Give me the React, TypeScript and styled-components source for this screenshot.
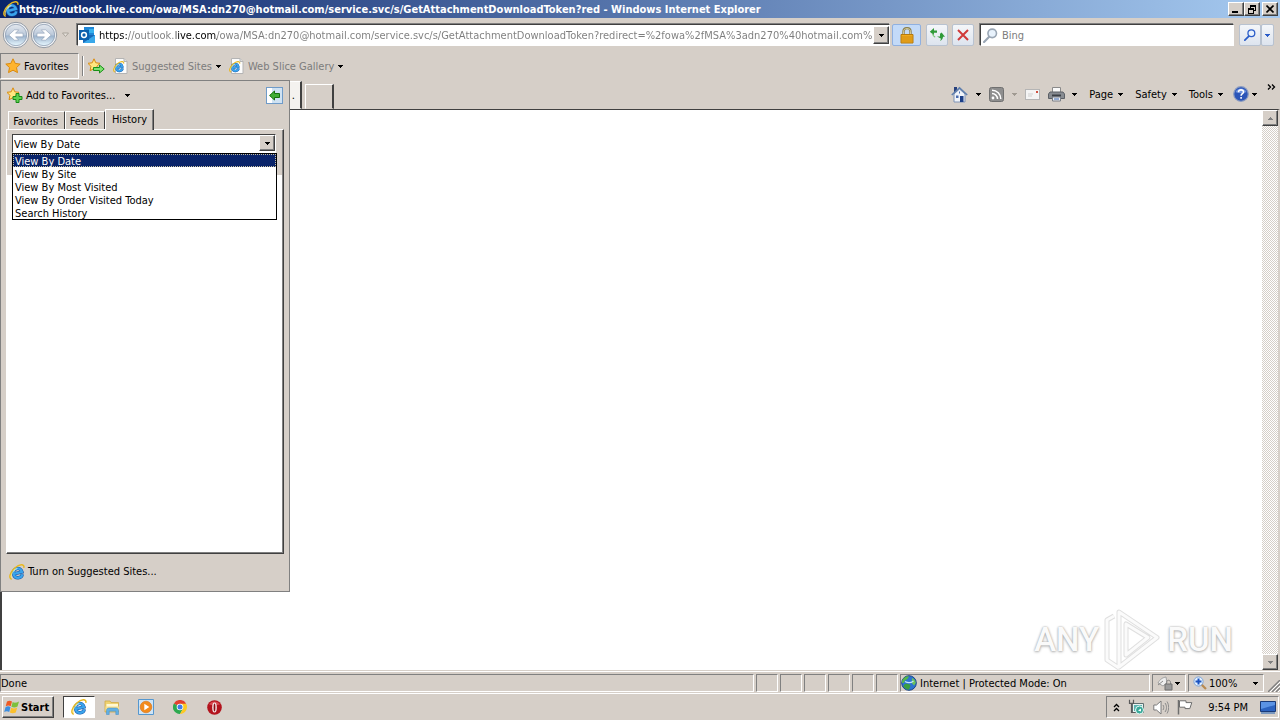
import React from "react";
import styled, { createGlobalStyle, css } from "styled-components";

const face = "#d6cfc8";
const shade = "#808080";
const dark = "#404040";
const ink = "#000000";

const GlobalStyle = createGlobalStyle`
  *, *::before, *::after { box-sizing: border-box; }
  body {
    margin: 0;
    background: ${face};
    color: ${ink};
    font: 11px/13px "DejaVu Sans Condensed", Tahoma, "DejaVu Sans", sans-serif;
  }
  button, input, select { font: inherit; color: inherit; }
  button { padding: 0; border: 0; background: none; white-space: nowrap; }
  a { color: inherit; text-decoration: none; }
  svg { display: block; flex: none; }
`;

const raised = css`
  background: ${face};
  border: 1px solid;
  border-color: #ffffff ${dark} ${dark} #ffffff;
  box-shadow: inset -1px -1px 0 ${shade};
`;

const sunken = css`
  border: 1px solid;
  border-color: ${shade} #ffffff #ffffff ${shade};
`;

/* ---------- Window frame ---------- */

const Desktop = styled.div`
  display: flex;
  flex-direction: column;
  min-height: 100vh;
`;

const TitleBar = styled.header`
  display: flex;
  align-items: center;
  height: 18px;
  padding: 0 2px 0 3px;
  background: linear-gradient(to right, #0a246a, #a6caf0);
`;

const Title = styled.h1`
  flex: 1;
  min-width: 0;
  margin: 0;
  padding-top: 1px;
  overflow: hidden;
  color: #ffffff;
  font-size: 11px;
  font-weight: 700;
  line-height: 17px;
  white-space: nowrap;
`;

const WindowButtons = styled.div`
  display: flex;
`;

const WindowButton = styled.button<{ $gap?: boolean }>`
  ${raised}
  display: grid;
  place-items: center;
  width: 16px;
  height: 14px;
  margin-left: ${(p) => (p.$gap ? 2 : 0)}px;
`;

/* ---------- Navigation bar ---------- */

const NavBar = styled.nav`
  display: flex;
  align-items: center;
  height: 34px;
  padding: 0 6px 0 2px;
`;

const TravelButtons = styled.div`
  display: flex;
  align-items: center;
  width: 74px;
`;

const PlainButton = styled.button`
  display: flex;
  align-items: center;
`;

const AddressBox = styled.div`
  display: flex;
  flex: 1;
  align-items: center;
  min-width: 0;
  height: 22px;
  padding-left: 1px;
  background: #ffffff;
  border: 1px solid;
  border-color: ${dark} #ffffff #ffffff ${dark};
  box-shadow: -1px -1px 0 ${shade};
  margin-left: 1px;
`;

const AddressInput = styled.input`
  flex: 1;
  min-width: 0;
  height: 20px;
  margin-left: 4px;
  padding: 1px 0 0;
  border: 0;
  outline: 0;
  color: transparent;
  background: linear-gradient(
    to right,
    #000000 28px,
    #7c7c7c 28px,
    #7c7c7c 77px,
    #000000 77px,
    #000000 118px,
    #7c7c7c 118px
  );
  background-clip: text;
`;

const DropButton = styled.button`
  ${raised}
  display: grid;
  flex: none;
  place-items: center;
  width: 16px;
  height: 18px;
`;

const NavButton = styled.button<{ $w: number; $lit?: boolean; $gap: number }>`
  display: grid;
  flex: none;
  place-items: center;
  width: ${(p) => p.$w}px;
  height: 22px;
  margin-left: ${(p) => p.$gap}px;
  border: 1px solid ${(p) => (p.$lit ? "#8fb0e0" : "#b8c2d0")};
  border-radius: 2px;
  background: ${(p) => (p.$lit ? "#c3daf8" : "linear-gradient(#f4f6f9, #dde4ee)")};
`;

const SearchBox = styled.label`
  display: flex;
  flex: 0 0 254px;
  align-items: center;
  height: 22px;
  margin-left: 6px;
  padding-left: 2px;
  background: #ffffff;
  border: 1px solid;
  border-color: ${dark} #ffffff #ffffff ${dark};
  box-shadow: -1px -1px 0 ${shade};
`;

const SearchInput = styled.input`
  flex: 1;
  min-width: 0;
  height: 20px;
  margin-left: 4px;
  padding: 1px 0 0;
  border: 0;
  outline: 0;
  background: transparent;
  &::placeholder { color: #7c7c7c; opacity: 1; }
`;

/* ---------- Favorites bar ---------- */

const FavoritesBar = styled.div`
  display: flex;
  align-items: center;
  height: 28px;
`;

const FavoritesToggle = styled.button`
  display: flex;
  align-items: center;
  gap: 2px;
  width: 79px;
  height: 26px;
  padding-left: 4px;
  border: 1px solid;
  border-color: ${shade} #ffffff #ffffff ${shade};
`;

const Divider = styled.span`
  width: 2px;
  height: 20px;
  margin: 0 4px 0 3px;
  border-left: 1px solid ${shade};
  border-right: 1px solid #ffffff;
`;

const FavoriteLink = styled.button`
  display: flex;
  align-items: center;
  gap: 4px;
  height: 22px;
  margin-left: 8px;
  color: #7c7c7c;
`;

/* ---------- Tabs and command bar ---------- */

const CommandRow = styled.div`
  display: flex;
  align-items: flex-end;
  height: 29px;
`;

const PageTab = styled.button`
  width: 302px;
  height: 28px;
  padding-right: 5px;
  text-align: right;
  background: #f4f2ef;
  border: 1px solid;
  border-color: #ffffff ${dark} transparent #ffffff;
  border-right-width: 2px;
`;

const NewTab = styled.button`
  width: 29px;
  height: 25px;
  margin-left: 3px;
  border: 1px solid;
  border-color: #ffffff ${dark} transparent #ffffff;
  border-right-width: 2px;
`;

const CommandBar = styled.div`
  display: flex;
  align-items: center;
  height: 30px;
  margin-left: auto;
  padding-right: 4px;
`;

const Command = styled.button<{ $gap?: number; $inner?: number }>`
  display: flex;
  align-items: center;
  gap: ${(p) => p.$inner ?? 5}px;
  height: 20px;
  margin-left: ${(p) => p.$gap ?? 12}px;
`;

const Chevron = styled.button`
  align-self: flex-start;
  height: 16px;
  margin-left: 10px;
`;

/* ---------- Browser viewport ---------- */

const Browser = styled.main`
  position: relative;
  display: flex;
  flex: 1;
  flex-direction: column;
`;

const Viewport = styled.div`
  display: flex;
  flex: 1;
  justify-content: flex-end;
  min-height: 400px;
  background: #ffffff;
  border: solid ${dark};
  border-width: 1px 0 0 2px;
  border-right: 2px solid ${face};
`;

const ScrollBar = styled.div`
  display: flex;
  flex-direction: column;
  justify-content: space-between;
  width: 16px;
  background: repeating-conic-gradient(#ffffff 0 25%, ${face} 0 50%) 0 0 / 2px 2px;
`;

const ScrollButton = styled.button`
  ${raised}
  display: grid;
  place-items: center;
  width: 16px;
  height: 16px;
`;

const Watermark = styled.div`
  position: absolute;
  right: 47px;
  bottom: 0;
  display: flex;
  align-items: center;
  gap: 5px;
  height: 61px;
  color: #fafafa;
  font: 500 33px/38px Roboto, "Liberation Sans", sans-serif;
  text-shadow: 0 0 2px #a4a4a4, 0 1px 3px #b8b8b8;
  pointer-events: none;
`;

/* ---------- Favorites center ---------- */

const Center = styled.aside`
  position: absolute;
  top: 0;
  bottom: 78px;
  left: 0;
  z-index: 1;
  display: flex;
  flex-direction: column;
  width: 290px;
  padding: 0 5px;
  background: ${face};
  border: 1px solid ${shade};
`;

const CenterHeader = styled.div`
  display: flex;
  align-items: center;
  justify-content: space-between;
  height: 28px;
  padding: 0 1px;
`;

const AddButton = styled.button`
  display: flex;
  align-items: center;
  gap: 2px;
`;

const AddLabel = styled.span`
  margin-right: 8px;
`;

const DockButton = styled.button`
  display: grid;
  place-items: center;
  width: 17px;
  height: 17px;
  background: linear-gradient(to right, #ffffff 5px, #cfe2f3 5px);
  border: 1px solid #6f9bc8;
`;

const CenterTabs = styled.div`
  display: flex;
  align-items: flex-end;
  height: 20px;
  padding-left: 2px;
`;

const CenterTab = styled.button<{ $w: number; $active?: boolean }>`
  position: relative;
  z-index: ${(p) => (p.$active ? 1 : 0)};
  width: ${(p) => p.$w}px;
  height: ${(p) => (p.$active ? 21 : 18)}px;
  margin-bottom: ${(p) => (p.$active ? -1 : 0)}px;
  padding: ${(p) => (p.$active ? "0 0 1px" : "2px 2px 0 0")};
  background: ${face};
  border: 1px solid;
  border-color: #ffffff ${dark} transparent #ffffff;
  border-bottom-width: 0;
  box-shadow: ${(p) => (p.$active ? `inset -1px 0 0 ${shade}` : "none")};
`;

const Pane = styled.section`
  position: relative;
  display: flex;
  flex: 1;
  flex-direction: column;
  background: #ffffff;
  border: 1px solid;
  border-color: #ffffff ${dark} ${dark} #ffffff;
  box-shadow: inset -1px -1px 0 ${shade};
`;

const PaneHead = styled.div`
  height: 45px;
  margin-right: 1px;
  padding: 4px 6px 0 5px;
  background: ${face};
`;

const SelectWrap = styled.div`
  position: relative;
`;

const ViewSelect = styled.select`
  display: block;
  width: 100%;
  height: 19px;
  padding: 2px 0 0 1px;
  appearance: none;
  background: #ffffff;
  border: 1px solid;
  border-color: ${dark} #ffffff #ffffff ${dark};
  border-radius: 0;
  outline: 0;
`;

const SelectArrow = styled.span`
  ${raised}
  position: absolute;
  top: 1px;
  right: 1px;
  display: grid;
  place-items: center;
  width: 16px;
  height: 16px;
  pointer-events: none;
`;

const OptionList = styled.ul`
  position: absolute;
  top: 19px;
  right: -1px;
  left: 0;
  margin: 0;
  padding: 0;
  background: #ffffff;
  border: 1px solid #000000;
  list-style: none;
`;

const Option = styled.li<{ $selected?: boolean }>`
  height: 13px;
  padding-left: 2px;
  line-height: 15px;
  color: ${(p) => (p.$selected ? "#ffffff" : ink)};
  background: ${(p) => (p.$selected ? "#0a246a" : "transparent")};
  outline: ${(p) => (p.$selected ? "1px dotted #c8c0a0" : "none")};
  outline-offset: -1px;
`;

const CenterFooter = styled.div`
  display: flex;
  align-items: center;
  height: 37px;
  padding: 0 0 2px 3px;
`;

const SuggestLink = styled.a`
  display: flex;
  align-items: center;
  gap: 3px;
`;

/* ---------- Status bar ---------- */

const StatusBar = styled.footer`
  display: flex;
  gap: 2px;
  height: 23px;
  margin-top: 1px;
  padding: 2px 0 1px;
  border-top: 1px solid #ffffff;
  border-bottom: 1px solid #ffffff;
`;

const StatusCell = styled.div<{ $w?: number }>`
  ${sunken}
  display: flex;
  flex: ${(p) => (p.$w ? `0 0 ${p.$w}px` : "1")};
  align-items: center;
  gap: 3px;
  min-width: 0;
  white-space: nowrap;
`;

const StatusButton = styled.button`
  display: flex;
  flex: 1;
  align-items: center;
  justify-content: space-between;
  padding: 0 5px 0 4px;
`;

const ZoomLabel = styled.span`
  display: flex;
  align-items: center;
  gap: 2px;
`;

const GripCell = styled.div`
  display: flex;
  align-items: flex-end;
  justify-content: flex-end;
  width: 14px;
`;

/* ---------- Taskbar ---------- */

const TaskBar = styled.div`
  display: flex;
  align-items: center;
  height: 26px;
  padding: 0 1px 0 2px;
`;

const StartButton = styled.button`
  ${raised}
  display: flex;
  align-items: center;
  gap: 1px;
  width: 52px;
  height: 22px;
  padding-left: 1px;
  font-weight: 700;
`;

const TaskButton = styled.button<{ $active?: boolean }>`
  display: grid;
  place-items: center;
  width: ${(p) => (p.$active ? 32 : 34)}px;
  height: 22px;
  ${(p) =>
    p.$active &&
    css`
      background: #ffffff;
      border: 1px solid;
      border-color: ${dark} #ffffff #ffffff ${dark};
    `}
`;

const QuickLaunch = styled.div`
  display: flex;
  margin-left: 9px;
`;

const Tray = styled.div`
  ${sunken}
  display: flex;
  align-items: center;
  gap: 8px;
  width: 173px;
  height: 22px;
  margin-left: auto;
  padding: 0 2px 0 6px;
`;

const Clock = styled.time`
  margin: 0 4px 0 auto;
  white-space: nowrap;
`;

/* ---------- Icons ---------- */

const Caret = ({ color = ink, up = false }: { color?: string; up?: boolean }) => (
  <svg width="5" height="3" viewBox="0 0 5 3" shapeRendering="crispEdges" aria-hidden="true">
    <path d={up ? "M0 3h5v-1h-1v-1h-1v-1h-1v1h-1v1h-1z" : "M0 0h5v1h-1v1h-1v1h-1v-1h-1v-1h-1z"} fill={color} />
  </svg>
);

const IeGlyph = () => (
  <>
    <g transform="rotate(-14 8.500 9)">
      <path d="M4.900 9h8.200C13.100 3 4.400 3 4.400 9c0 6 7 6 8.400 2.400" fill="none" stroke="#1b58a8" strokeWidth="3.400" />
      <path d="M4.900 9h8.200C13.100 3 4.400 3 4.400 9c0 6 7 6 8.400 2.400" fill="none" stroke="#3aa4ec" strokeWidth="2.300" />
      <path d="M5 6.600c1-1.600 2.500-2.200 4.500-2" stroke="#b4e4ff" strokeWidth="1" fill="none" />
    </g>
    <path d="M2.800 15.200C-.8 14.500 1 8 5.800 4 10.200.3 15.800-.6 14.800 3.800" fill="none" stroke="#e8b820" strokeWidth="1.500" />
    <path d="M2.600 13.800C1.500 12 3 8 6.500 4.800" fill="none" stroke="#fbe67a" strokeWidth=".8" />
  </>
);

const IeIcon = ({ size = 16 }: { size?: number }) => (
  <svg width={size} height={size} viewBox="0 0 16 16" aria-hidden="true">
    <IeGlyph />
  </svg>
);

const IePage = () => (
  <svg width="15" height="16" viewBox="0 0 15 16" aria-hidden="true">
    <path d="M2.500.5h8.500l3 3v12H2.500z" fill="#fcfcfc" stroke="#b4b4b4" />
    <path d="M11 .5v3h3" fill="#dddddd" stroke="#b4b4b4" />
    <g transform="translate(0 3) scale(.72)">
      <IeGlyph />
    </g>
  </svg>
);

const Star = ({ badge }: { badge?: "plus" | "arrow" }) => (
  <svg width="17" height="16" viewBox="0 0 17 16" aria-hidden="true">
    <path
      d={badge ? "M6 .8l1.800 4 4.200.5-3.100 3 .9 4.400L6 10.600l-3.900 2.100.8-4.400-3-3 4.300-.5z" : "M8 .8l2.200 4.600 5 .7-3.700 3.500 1 5L8 12.200l-4.500 2.400 1-5L.8 6.100l5-.7z"}
      fill={badge ? "#ffe680" : "#ffb42e"}
      stroke="#d98a10"
    />
    {badge === "plus" && <path d="M9 6.500h3v3h3v3h-3v3H9v-3H6v-3h3z" fill="#5ed050" stroke="#168a16" />}
    {badge === "arrow" && <path d="M5.500 9.500h6V7l4.700 4-4.700 4v-2.500h-6z" fill="#7fe070" stroke="#189018" />}
  </svg>
);

const TravelIcon = ({ forward }: { forward?: boolean }) => (
  <svg width="28" height="28" viewBox="0 0 28 28" aria-hidden="true">
    <defs>
      <linearGradient id="orb" x1="0" y1="0" x2="0" y2="1">
        <stop offset="0" stopColor="#e4e8ee" />
        <stop offset=".48" stopColor="#bccadb" />
        <stop offset=".55" stopColor="#9db4cd" />
        <stop offset="1" stopColor="#e8f8ff" />
      </linearGradient>
    </defs>
    <circle cx="14" cy="14" r="12.700" fill="#f3f5f7" stroke="#9299a3" />
    <circle cx="14" cy="14" r="10.700" fill="url(#orb)" stroke="#8c9bb0" strokeWidth=".8" />
    <path
      d={forward ? "M7 12.200h7.500L11.300 8.800h4.200l5.700 5.200-5.700 5.200h-4.200l3.200-3.400H7z" : "M21 12.200h-7.500l3.200-3.400h-4.200L6.800 14l5.700 5.200h4.200l-3.200-3.400H21z"}
      fill="#ffffff"
      stroke="#7f90a8"
      strokeWidth=".5"
    />
  </svg>
);

const OutlookIcon = () => (
  <svg width="16" height="16" viewBox="0 0 16 16" aria-hidden="true">
    <path d="M5 0h10v8H5z" fill="#1f86d6" />
    <path d="M10 2h5v4h-5z" fill="#35b1ee" />
    <path d="M4 8h12v8H4z" fill="#1768b8" />
    <path d="M4 16l12-8v8z" fill="#39a8ea" />
    <path d="M0 3h10v10H0z" fill="#0b5fad" />
    <circle cx="5" cy="8" r="2.400" fill="none" stroke="#ffffff" strokeWidth="1.500" />
  </svg>
);

const LockIcon = () => (
  <svg width="14" height="17" viewBox="0 0 14 17" aria-hidden="true">
    <path d="M3.500 8V4.500C3.500 0 10.500 0 10.500 4.500V8" fill="none" stroke="#8d8253" strokeWidth="2.400" />
    <path d="M3.500 8V4.500C3.500 .6 10.500 .6 10.500 4.500V8" fill="none" stroke="#e4dca8" strokeWidth=".8" />
    <path d="M1 7.500h12v8.500H1z" fill="#f0aa1e" stroke="#b57a10" />
    <path d="M1.500 10h11M1.500 12h11M1.500 14h11" stroke="#c98812" strokeWidth=".8" />
  </svg>
);

const RefreshIcon = () => (
  <svg width="16" height="14" viewBox="0 0 16 14" aria-hidden="true">
    <path d="M5 0v2.500h3v2.200H5v2.600L.8 3.700z" fill="#2f9a38" />
    <path d="M3.600 5.500c.2 2 1 3 2.600 3.600" fill="none" stroke="#7cc47c" strokeWidth="1.200" />
    <path d="M8 8.500h3v-2.500h-.2l1.800-1.400L16 8.700h-2c-.2 2-1 3.300-3 4.300.6-1 .9-1.500.8-2.500z" fill="#2f9a38" />
  </svg>
);

const StopIcon = () => (
  <svg width="12" height="12" viewBox="0 0 12 12" aria-hidden="true">
    <path d="M1 1l10 10M11 1L1 11" stroke="#d03a3a" strokeWidth="2" />
  </svg>
);

const Magnifier = ({ color, size = 14 }: { color: string; size?: number }) => (
  <svg width={size} height={size} viewBox="0 0 14 14" aria-hidden="true">
    <path d="M6 8L1 13" stroke={color} strokeWidth="2" strokeLinecap="round" />
    <circle cx="8.600" cy="5" r="4" fill="#e8f2fc" stroke={color} strokeWidth="1.500" />
  </svg>
);

const HomeIcon = () => (
  <svg width="17" height="17" viewBox="0 0 17 17" aria-hidden="true">
    <path d="M3 1h3v5H3z" fill="#27407c" />
    <path d="M3 8l5.500-5L14 8v8H3z" fill="#f0f4fa" stroke="#7f93b5" />
    <path d="M.8 9L8.500 1.800 16.200 9" fill="none" stroke="#5f7fae" strokeWidth="1.600" />
    <path d="M9 10h3.500v6H9z" fill="#1c3f88" />
    <path d="M5 9.500h2.500V12H5z" fill="#4a6cae" />
    <path d="M8.500 5.500v2" stroke="#4a6cae" />
  </svg>
);

const FeedIcon = () => (
  <svg width="15" height="15" viewBox="0 0 15 15" aria-hidden="true">
    <rect x=".5" y=".5" width="14" height="14" rx="2" fill="#8e8e8e" stroke="#707070" />
    <circle cx="4" cy="11" r="1.400" fill="#ffffff" />
    <path d="M3 6.500c3 0 5.500 2.500 5.500 5.500M3 3.200c5 0 8.800 3.800 8.800 8.800" fill="none" stroke="#ffffff" strokeWidth="1.500" />
  </svg>
);

const MailIcon = () => (
  <svg width="15" height="11" viewBox="0 0 15 11" aria-hidden="true">
    <rect x=".5" y=".5" width="14" height="10" fill="#f4f4f4" stroke="#b5b5b5" />
    <path d="M3 5h5M3 7h4" stroke="#cfcfcf" />
    <path d="M11 2h2v2h-2z" fill="#d05040" />
  </svg>
);

const PrinterIcon = () => (
  <svg width="17" height="16" viewBox="0 0 17 16" aria-hidden="true">
    <path d="M4.500 1.500h8v6h-8z" fill="#fafafa" stroke="#8a8a8a" />
    <path d="M2 6h13l1.500 2v4.500H.5V8z" fill="#878b91" stroke="#5c6066" />
    <path d="M4 8.500h9v2H4z" fill="#3c4046" />
    <path d="M4.500 11h8v4h-8z" fill="#e9edf4" stroke="#7a7f86" />
    <path d="M6 13h5" stroke="#3f69b0" />
  </svg>
);

const HelpIcon = () => (
  <svg width="16" height="16" viewBox="0 0 16 16" aria-hidden="true">
    <circle cx="8" cy="8" r="7.300" fill="#2b55b8" stroke="#8b9cc0" strokeWidth="1.200" />
    <path d="M2.500 6a6 6 0 0 1 11 0c-3 1.500-8 1.500-11 0z" fill="#6f94e0" />
    <path d="M5.500 6.200c0-3.200 5.200-3 5 0-.1 1.500-2.400 1.600-2.400 3.500M8.100 11v1.700" fill="none" stroke="#ffffff" strokeWidth="1.600" />
  </svg>
);

const DockArrow = () => (
  <svg width="11" height="11" viewBox="0 0 11 11" aria-hidden="true">
    <path d="M.6 5.500L5.500 1v2.500h5v4h-5V10z" fill="#3fae35" stroke="#14700f" />
  </svg>
);

const GlobeIcon = () => (
  <svg width="16" height="16" viewBox="0 0 16 16" aria-hidden="true">
    <circle cx="8" cy="8" r="7.300" fill="#2d74d0" stroke="#1c4588" />
    <path d="M2 4c2-2.500 4-3 6-2.800L6.500 4 4 5.500 2.600 8 1 8c0-1.500.2-2.800 1-4z" fill="#55b848" />
    <path d="M4 9c3-.5 5 0 5.500 2L7.800 14.800C4.500 14.500 3 12.500 2.300 11z" fill="#3a9e40" />
    <path d="M11 3c2 .5 3.500 2.500 3.800 5L13 10.500 10.800 8z" fill="#6cc45a" />
    <path d="M4 6.500c2.500 1.500 6 1.500 8.500-.5" stroke="#c5e6fb" fill="none" strokeWidth="1.200" />
  </svg>
);

const PrivacyIcon = () => (
  <svg width="16" height="16" viewBox="0 0 16 16" aria-hidden="true">
    <path d="M1 8c2-4 5-5.500 8-6l1 6-4 3z" fill="#eeeeee" stroke="#a0a0a0" />
    <path d="M1 10l5-4" stroke="#888888" />
    <path d="M9.500 9V7.500c0-3 4-3 4 0V9" fill="none" stroke="#808080" />
    <path d="M8 9h7v6H8z" fill="#9a9a9a" stroke="#707070" />
  </svg>
);

const ZoomIcon = () => (
  <svg width="14" height="14" viewBox="0 0 14 14" aria-hidden="true">
    <path d="M8 8l5 5" stroke="#b88a50" strokeWidth="2.200" />
    <circle cx="5.500" cy="5.500" r="4.600" fill="#e2f0ff" stroke="#7da4d8" />
    <path d="M5.500 2.500v6M2.500 5.500h6" stroke="#1a52c0" strokeWidth="2" />
  </svg>
);

const Grip = () => (
  <svg width="12" height="12" viewBox="0 0 12 12" aria-hidden="true">
    <path d="M0 12L12 0M4 12l8-8M8 12l4-4" stroke="#808080" strokeWidth="1.400" />
    <path d="M2 12L12 2M6 12l6-6M10 12l2-2" stroke="#ffffff" />
  </svg>
);

const WindowsFlag = () => (
  <svg width="16" height="16" viewBox="0 0 16 16" aria-hidden="true">
    <path d="M3 2.500c2-1.200 3.500-1 5 0L6.700 7.300c-1.500-1-3-1.100-5 0z" fill="#ee5a24" />
    <path d="M8.700 3c1.500 1 3.500 1 6.300-.5l-1.500 5c-2.300 1.200-4 1.200-6.100.2z" fill="#7cc03c" />
    <path d="M1.500 8.200c2-1.200 3.600-1 5 0l-1.300 4.900c-1.500-1-3.200-1.100-5 0z" fill="#3c8ee0" />
    <path d="M7.200 8.700c1.700 1 3.700 1 6-.2l-1.400 5c-2.200 1-4.200 1-5.900 0z" fill="#fbc02d" />
  </svg>
);

const FolderIcon = () => (
  <svg width="16" height="16" viewBox="0 0 16 16" aria-hidden="true">
    <path d="M1 2h5l1 1.500h7.500V13H1z" fill="#efd272" stroke="#d0aa48" strokeWidth=".8" />
    <path d="M2.500 5h11.500v4H2.500z" fill="#fff8d2" />
    <path d="M1.500 7.500h13.500v4H1.500z" fill="#f5df90" />
    <path d="M2.500 15.500v-4c0-1.500 1-2.500 2.500-2.500h7c1.500 0 2.500 1 2.500 2.500v4h-2.700v-3.300H5.200v3.300z" fill="#62b0e4" stroke="#3f8ac4" strokeWidth=".5" />
  </svg>
);

const PlayerIcon = () => (
  <svg width="16" height="16" viewBox="0 0 16 16" aria-hidden="true">
    <path d="M.5.5h15v15H.5z" fill="#cfe4f5" stroke="#5597cf" />
    <circle cx="8" cy="8" r="5.800" fill="#f28a1c" stroke="#d87010" strokeWidth=".6" />
    <path d="M6.300 4.800L11.300 8l-5 3.200z" fill="#ffffff" />
  </svg>
);

const ChromeIcon = () => (
  <svg width="14" height="14" viewBox="0 0 14 14" aria-hidden="true">
    <path d="M7 7L.9 3.500A7 7 0 0 1 13.100 3.500z" fill="#e2402f" />
    <path d="M7 7L.9 3.500A7 7 0 0 0 7 14l3-5.200z" fill="#2da94f" />
    <path d="M7 3.700h6.200A7 7 0 0 1 7 14l3-5.200z" fill="#fdc922" />
    <circle cx="7" cy="7" r="3.300" fill="#ffffff" />
    <circle cx="7" cy="7" r="2.500" fill="#3f7de8" />
  </svg>
);

const OperaIcon = () => (
  <svg width="15" height="15" viewBox="0 0 15 15" aria-hidden="true">
    <circle cx="7.500" cy="7.500" r="7.300" fill="#b3131d" />
    <path d="M2 4.500a6.500 6.500 0 0 1 11 0c-3 1-8 1-11 0z" fill="#d84850" />
    <ellipse cx="7.500" cy="7.500" rx="2.300" ry="5" fill="#f6eeee" />
    <ellipse cx="7.500" cy="7.500" rx=".9" ry="4" fill="#8c0c14" />
  </svg>
);

const DoubleUp = () => (
  <svg width="7" height="9" viewBox="0 0 7 9" aria-hidden="true">
    <path d="M1 4l2.500-2.500L6 4M1 8l2.500-2.500L6 8" fill="none" stroke="#000000" strokeWidth="1.300" />
  </svg>
);

const DoubleRight = () => (
  <svg width="9" height="6" viewBox="0 0 9 6" aria-hidden="true">
    <path d="M1 .5L3.500 3 1 5.500M5 .5L7.500 3 5 5.500" fill="none" stroke="#000000" strokeWidth="1.300" />
  </svg>
);

const NetworkIcon = () => (
  <svg width="17" height="17" viewBox="0 0 17 17" aria-hidden="true">
    <path d="M4.500 4.500h11v9h-11z" fill="#e8f2f0" stroke="#5f6f70" />
    <path d="M6 6h8v6H6z" fill="#5ab4b0" />
    <path d="M1.500.8v3.500h4V.8M3.500 4.500v9h4" fill="none" stroke="#5a5a5a" strokeWidth="1.200" />
    <circle cx="11.500" cy="11" r="4" fill="#38a898" stroke="#e8f8f4" />
    <path d="M10 11.500l3-2v3z" fill="#ffffff" />
  </svg>
);

const SpeakerIcon = () => (
  <svg width="16" height="15" viewBox="0 0 16 15" aria-hidden="true">
    <path d="M.8 5h2.700L8 1v13l-4.500-4H.8z" fill="#ffffff" stroke="#7b7b7b" />
    <path d="M10 5c1 1.500 1 3.500 0 5M12 3c2 2.500 2 6.500 0 9M14 1.500c2.200 3.500 2.200 8.500 0 12" fill="none" stroke="#8a8a8a" />
  </svg>
);

const FlagIcon = () => (
  <svg width="16" height="16" viewBox="0 0 16 16" aria-hidden="true">
    <path d="M1.500 1v14.500" stroke="#6e6e6e" strokeWidth="1.500" />
    <path d="M2.500 1.800h6.500v1.800h5.800l-2 6H8V8.200H2.500z" fill="#ffffff" stroke="#6e6e6e" />
  </svg>
);

const DesktopIcon = () => (
  <svg width="16" height="14" viewBox="0 0 16 14" aria-hidden="true">
    <path d="M.5 1.500h15v10H.5z" fill="#2c63c0" stroke="#193a78" />
    <path d="M1 2h14v3L1 9z" fill="#5b93e4" />
    <path d="M1 13h14" stroke="#5a84bc" strokeWidth="1.500" />
  </svg>
);

const PlayMark = () => (
  <svg width="58" height="62" viewBox="0 0 58 62" aria-hidden="true">
    <g fill="none" strokeLinejoin="round">
      <path d="M10 7l-7 4v40l12 8M15 3l38 25.500L15 58V3zM22 15v31l22-17.500z" stroke="#c4c4c4" strokeWidth="5" opacity=".55" />
      <path d="M10 7l-7 4v40l12 8M15 3l38 25.500L15 58V3zM22 15v31l22-17.500z" stroke="#fbfbfb" strokeWidth="3" />
    </g>
  </svg>
);

/* ---------- Page ---------- */

const views = ["View By Date", "View By Site", "View By Most Visited", "View By Order Visited Today", "Search History"];
const menus = ["Page", "Safety", "Tools"];
const emptyCells = [0, 1, 2, 3, 4, 5];

export default function App() {
  const [view, setView] = React.useState(views[0]);

  return (
    <Desktop>
      <GlobalStyle />
      <TitleBar>
        <IeIcon />
        <Title>
          https://outlook.live.com/owa/MSA:dn270@hotmail.com/service.svc/s/GetAttachmentDownloadToken?red - Windows
          Internet Explorer
        </Title>
        <WindowButtons>
          <WindowButton aria-label="Minimize">
            <svg width="8" height="8" shapeRendering="crispEdges"><path d="M0 6h6v2H0z" /></svg>
          </WindowButton>
          <WindowButton aria-label="Restore">
            <svg width="8" height="9" shapeRendering="crispEdges">
              <path d="M2 0h6v6H6V5h1V2H3v1H2zM0 3h6v6H0zM1 5v3h4V5z" fillRule="evenodd" />
            </svg>
          </WindowButton>
          <WindowButton aria-label="Close" $gap>
            <svg width="8" height="8"><path d="M.5.5l7 7M7.500.5l-7 7" stroke="#000000" strokeWidth="1.600" /></svg>
          </WindowButton>
        </WindowButtons>
      </TitleBar>

      <NavBar>
        <TravelButtons>
          <PlainButton aria-label="Back"><TravelIcon /></PlainButton>
          <PlainButton aria-label="Forward"><TravelIcon forward /></PlainButton>
          <PlainButton aria-label="Recent pages">
            <svg width="14" height="6" viewBox="0 0 14 6"><path d="M4.500 1h6l-3 3.500z" fill="#e8e4de" stroke="#a8a29a" /></svg>
          </PlainButton>
        </TravelButtons>
        <AddressBox>
          <OutlookIcon />
          <AddressInput
            aria-label="Address"
            defaultValue="https://outlook.live.com/owa/MSA:dn270@hotmail.com/service.svc/s/GetAttachmentDownloadToken?redirect=%2fowa%2fMSA%3adn270%40hotmail.com%2f"
          />
          <DropButton aria-label="Show address list"><Caret /></DropButton>
        </AddressBox>
        <NavButton aria-label="Security report" $w={29} $gap={2} $lit><LockIcon /></NavButton>
        <NavButton aria-label="Refresh" $w={22} $gap={5}><RefreshIcon /></NavButton>
        <NavButton aria-label="Stop" $w={22} $gap={4}><StopIcon /></NavButton>
        <SearchBox>
          <Magnifier color="#9aa6b4" size={15} />
          <SearchInput aria-label="Search" placeholder="Bing" />
        </SearchBox>
        <NavButton aria-label="Search" $w={22} $gap={5}><Magnifier color="#2a5cc8" size={12} /></NavButton>
        <NavButton aria-label="Search options" $w={13} $gap={0}><Caret color="#2a5cc8" /></NavButton>
      </NavBar>

      <FavoritesBar>
        <FavoritesToggle><Star />Favorites</FavoritesToggle>
        <Divider />
        <PlainButton aria-label="Add to Favorites Bar"><Star badge="arrow" /></PlainButton>
        <FavoriteLink><IePage />Suggested Sites<Caret /></FavoriteLink>
        <FavoriteLink><IePage />Web Slice Gallery<Caret /></FavoriteLink>
      </FavoritesBar>

      <Browser>
        <CommandRow>
          <PageTab>.</PageTab>
          <NewTab aria-label="New Tab" />
          <CommandBar>
            <Command aria-label="Home" $inner={8}><HomeIcon /><Caret /></Command>
            <Command aria-label="Feeds" $gap={8} $inner={8}><FeedIcon /><Caret color="#a09a92" /></Command>
            <Command aria-label="Read mail" $gap={8}><MailIcon /></Command>
            <Command aria-label="Print" $gap={8} $inner={7}><PrinterIcon /><Caret /></Command>
            {menus.map((name) => (
              <Command key={name}>{name}<Caret /></Command>
            ))}
            <Command aria-label="Help" $gap={10} $inner={3}><HelpIcon /><Caret /></Command>
            <Chevron aria-label="More commands"><DoubleRight /></Chevron>
          </CommandBar>
        </CommandRow>

        <Viewport>
          <ScrollBar>
            <ScrollButton aria-label="Scroll up"><Caret up color={shade} /></ScrollButton>
            <ScrollButton aria-label="Scroll down"><Caret color={shade} /></ScrollButton>
          </ScrollBar>
        </Viewport>

        <Watermark>
          <span>ANY</span>
          <PlayMark />
          <span>RUN</span>
        </Watermark>

        <Center>
          <CenterHeader>
            <AddButton><Star badge="plus" /><AddLabel>Add to Favorites...</AddLabel><Caret /></AddButton>
            <DockButton aria-label="Pin the Favorites Center"><DockArrow /></DockButton>
          </CenterHeader>
          <CenterTabs role="tablist">
            <CenterTab role="tab" $w={57}>Favorites</CenterTab>
            <CenterTab role="tab" $w={40}>Feeds</CenterTab>
            <CenterTab role="tab" aria-selected $w={49} $active>History</CenterTab>
          </CenterTabs>
          <Pane>
            <PaneHead>
              <SelectWrap>
                <ViewSelect aria-label="History view" value={view} onChange={(e) => setView(e.target.value)}>
                  {views.map((name) => <option key={name}>{name}</option>)}
                </ViewSelect>
                <SelectArrow><Caret /></SelectArrow>
                <OptionList role="listbox" aria-label="History views">
                  {views.map((name) => (
                    <Option key={name} role="option" aria-selected={name === view} $selected={name === view} onClick={() => setView(name)}>
                      {name}
                    </Option>
                  ))}
                </OptionList>
              </SelectWrap>
            </PaneHead>
          </Pane>
          <CenterFooter>
            <SuggestLink href="#"><IeIcon />Turn on Suggested Sites...</SuggestLink>
          </CenterFooter>
        </Center>
      </Browser>

      <StatusBar>
        <StatusCell>Done</StatusCell>
        {emptyCells.map((n) => <StatusCell key={n} $w={22} />)}
        <StatusCell $w={250}><GlobeIcon />Internet | Protected Mode: On</StatusCell>
        <StatusCell $w={34}>
          <StatusButton aria-label="InPrivate filtering"><PrivacyIcon /><Caret /></StatusButton>
        </StatusCell>
        <StatusCell $w={76}>
          <StatusButton><ZoomLabel><ZoomIcon />100%</ZoomLabel><Caret /></StatusButton>
        </StatusCell>
        <GripCell><Grip /></GripCell>
      </StatusBar>

      <TaskBar>
        <StartButton><WindowsFlag />Start</StartButton>
        <QuickLaunch>
          <TaskButton aria-label="Internet Explorer" $active><IeIcon /></TaskButton>
          <TaskButton aria-label="Windows Explorer"><FolderIcon /></TaskButton>
          <TaskButton aria-label="Media Player"><PlayerIcon /></TaskButton>
          <TaskButton aria-label="Chrome"><ChromeIcon /></TaskButton>
          <TaskButton aria-label="Opera"><OperaIcon /></TaskButton>
        </QuickLaunch>
        <Tray>
          <PlainButton aria-label="Show hidden icons"><DoubleUp /></PlainButton>
          <NetworkIcon />
          <SpeakerIcon />
          <FlagIcon />
          <Clock>9:54 PM</Clock>
          <DesktopIcon />
        </Tray>
      </TaskBar>
    </Desktop>
  );
}
